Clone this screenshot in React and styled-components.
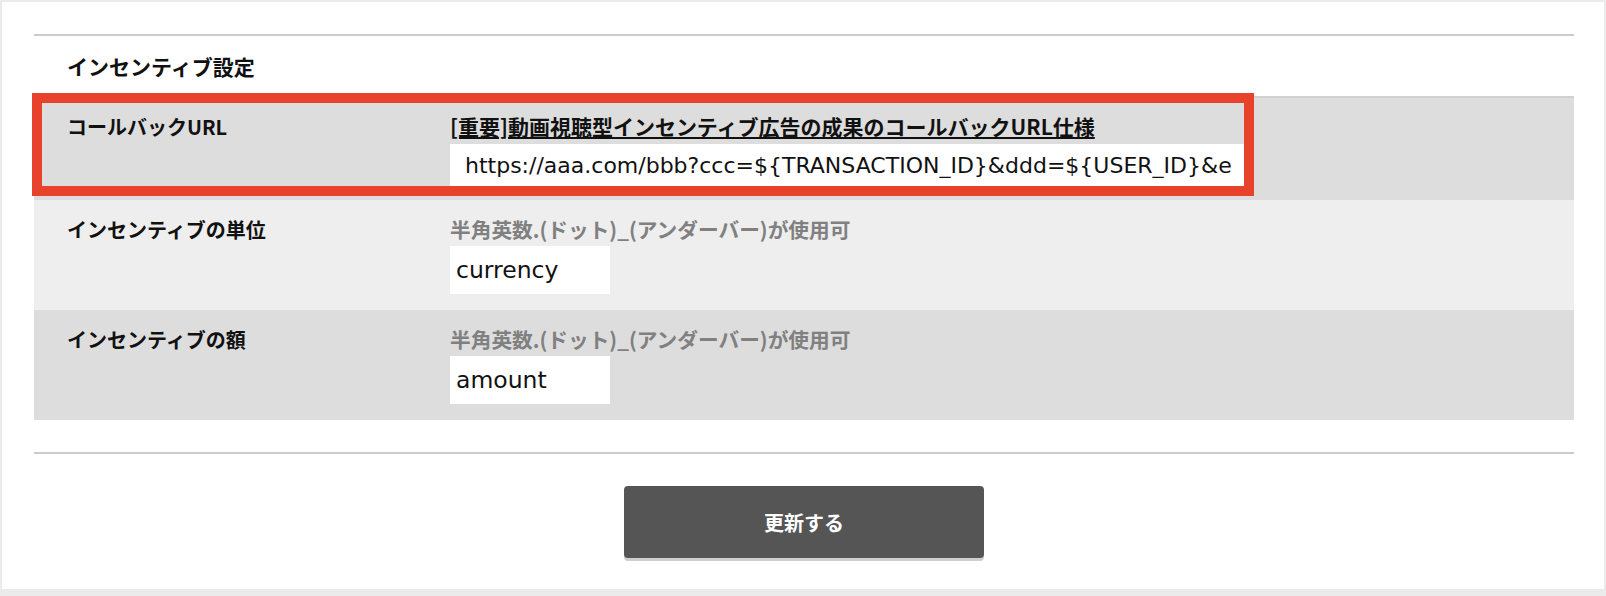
import React from "react";
import styled, { createGlobalStyle } from "styled-components";

const GlobalStyle = createGlobalStyle`
  html, body {
    margin: 0;
    padding: 0;
    background: #ebebeb;
  }
  body {
    font-family: "Noto Sans CJK JP", "Noto Sans", sans-serif;
    color: #111;
  }
  * { box-sizing: border-box; }
`;

const Page = styled.div`
  padding: 2px 2px 4px 2px;
`;

const Card = styled.main`
  position: relative;
  background: #fff;
  padding: 32px 30px 31px 32px;
`;

const Section = styled.section`
  border-top: 2px solid #cccccc;
  border-bottom: 2px solid #cccccc;
  padding-bottom: 32px;
`;

const SectionTitle = styled.h2`
  margin: 0;
  height: 60px;
  display: flex;
  align-items: center;
  padding-left: 33px;
  font-size: 21px;
  font-weight: 700;
  color: #111;
`;

const Row = styled.div`
  position: relative;
  display: grid;
  grid-template-columns: 383px 1fr;
  padding: ${(p) => p.$pad || "17px 0 16px 33px"};
  background: ${(p) => p.$bg};
  border-top: ${(p) => (p.$topBorder ? "2px solid #d0d0d0" : "none")};
`;

const Label = styled.div`
  font-size: 20px;
  line-height: 25px;
  font-weight: 700;
  color: #111;
`;

const Value = styled.div`
  display: flex;
  flex-direction: column;
  align-items: flex-start;
  gap: ${(p) => p.$gap || "4px"};
`;

const Hint = styled.div`
  font-size: 20.7px;
  line-height: 25px;
  font-weight: 700;
  color: #808080;
`;

const DocLink = styled.a`
  font-size: 21px;
  line-height: 25px;
  font-weight: 700;
  color: #111;
  text-decoration: underline;
  text-decoration-thickness: 2px;
  text-underline-offset: 2px;
`;

const TextInput = styled.input`
  display: block;
  width: ${(p) => p.$w}px;
  height: ${(p) => p.$h}px;
  padding: 0 ${(p) => p.$px}px;
  border: none;
  outline: none;
  background: #fff;
  font-family: "DejaVu Sans", "Liberation Sans", sans-serif;
  font-size: ${(p) => p.$fs || 22}px;
  color: #111;
`;

const Highlight = styled.div`
  position: absolute;
  left: -2px;
  top: -5px;
  width: 1222px;
  bottom: 4px;
  border: 10px solid #e8412c;
  pointer-events: none;
`;

const Footer = styled.div`
  display: flex;
  justify-content: center;
  padding-top: 32px;
`;

const SubmitButton = styled.button`
  width: 360px;
  height: 72px;
  border: none;
  border-radius: 4px;
  background: #555555;
  color: #fff;
  font-family: "Noto Sans CJK JP", sans-serif;
  font-size: 20px;
  font-weight: 700;
  box-shadow: 0 3px 0 #cfcfcf;
  cursor: pointer;
`;

const hintText = "半角英数.(ドット)_(アンダーバー)が使用可";

export default function App() {
  return (
    <>
      <GlobalStyle />
      <Page>
        <Card>
          <Section>
            <SectionTitle>インセンティブ設定</SectionTitle>
            <Row $bg="#dddddd" $topBorder $pad="16px 0 14px 33px">
              <Label>コールバックURL</Label>
              <Value $gap="5px">
                <DocLink href="#">[重要]動画視聴型インセンティブ広告の成果のコールバックURL仕様</DocLink>
                <TextInput
                  $w={796}
                  $h={42}
                  $px={15}
                  readOnly
                  value="https://aaa.com/bbb?ccc=${TRANSACTION_ID}&ddd=${USER_ID}&eee=${AMOUNT}"
                />
              </Value>
              <Highlight />
            </Row>
            <Row $bg="#eeeeee">
              <Label>インセンティブの単位</Label>
              <Value>
                <Hint>{hintText}</Hint>
                <TextInput $w={160} $h={48} $px={6} $fs={23.5} readOnly value="currency" />
              </Value>
            </Row>
            <Row $bg="#dddddd">
              <Label>インセンティブの額</Label>
              <Value>
                <Hint>{hintText}</Hint>
                <TextInput $w={160} $h={48} $px={6} $fs={23.5} readOnly value="amount" />
              </Value>
            </Row>
          </Section>
          <Footer>
            <SubmitButton type="button">更新する</SubmitButton>
          </Footer>
        </Card>
      </Page>
    </>
  );
}
